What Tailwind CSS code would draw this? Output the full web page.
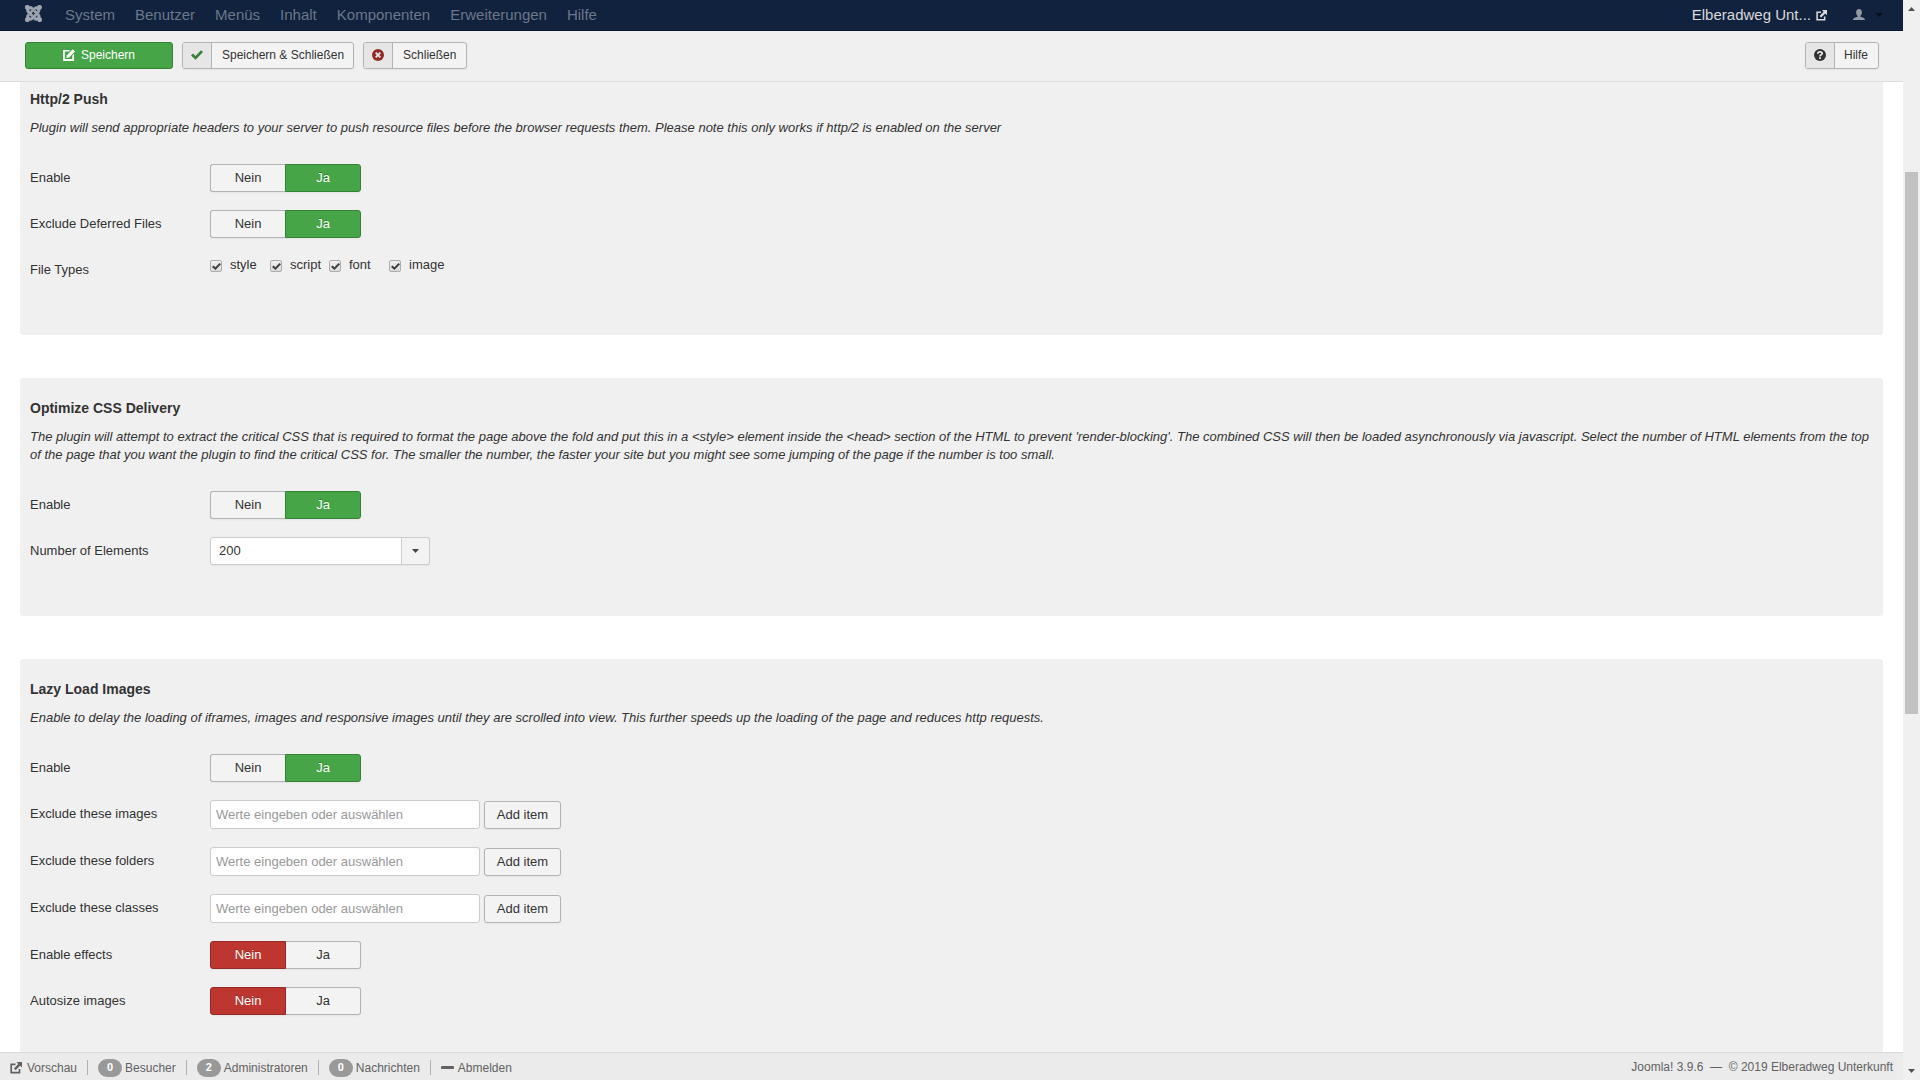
<!DOCTYPE html>
<html lang="de">
<head>
<meta charset="utf-8">
<meta name="viewport" content="width=device-width, initial-scale=1">
<title>Konfiguration</title>
<script src="https://cdn.jsdelivr.net/npm/@tailwindcss/browser@4"></script>
</head>
<body class="flex h-screen overflow-hidden bg-white font-['Liberation_Sans',Arial,sans-serif] text-[13px] leading-[18px] text-[#333]">

<svg class="hidden" xmlns="http://www.w3.org/2000/svg">
  <symbol id="joomla" viewBox="0 0 24 24"><path fill="currentColor" stroke="currentColor" stroke-width="1.2" d="M16.719 14.759L14.22 17.26l-2.37 2.37-.462.466c-1.368 1.365-3.297 1.83-5.047 1.397-.327 1.424-1.604 2.49-3.13 2.49C1.438 23.983 0 22.547 0 20.772c0-1.518 1.055-2.789 2.469-3.123-.446-1.76.016-3.705 1.396-5.08l.179-.18 2.37 2.37-.184.181c-.769.779-.769 2.024 0 2.789.771.78 2.022.78 2.787 0l.465-.465 2.367-2.371 2.502-2.506 2.368 2.372zM17.643 21.411c-1.822.563-3.885.12-5.328-1.318l-.18-.185 2.365-2.369.18.184c.771.768 2.018.768 2.787 0 .765-.765.769-2.01-.004-2.781l-.466-.465-2.365-2.37-2.502-2.503 2.37-2.369 2.499 2.505 2.367 2.37.464.464c1.365 1.36 1.846 3.278 1.411 5.021 1.56.224 2.759 1.56 2.759 3.18 0 1.784-1.439 3.21-3.209 3.21-1.545 0-2.851-1.096-3.135-2.565zM6.975 9.461l2.508-2.505 2.37-2.369.462-.461c1.365-1.366 3.27-1.845 5.01-1.41C17.566 1.161 18.875.02 20.445.02c1.77 0 3.209 1.435 3.209 3.209 0 1.631-1.23 2.985-2.819 3.195.435 1.739-.045 3.66-1.41 5.025l-.181.18-2.37-2.366.184-.184c.771-.77.77-2.016 0-2.783-.766-.768-2.01-.769-2.781 0l-.463.464-2.37 2.37-2.505 2.502zM3.209.02c1.5 0 2.76 1.025 3.12 2.415 1.77-.48 3.735-.015 5.115 1.365l.18.18-2.37 2.37-.18-.181c-.77-.77-2.02-.77-2.787 0-.766.766-.766 2.01 0 2.781l.466.465 2.37 2.37 2.5 2.5-2.37 2.37-2.5-2.5-2.37-2.37-.46-.465C2.55 9.96 2.07 8.05 2.49 6.31 1.06 5.98 0 4.73 0 3.229 0 1.455 1.438.02 3.209.02z"/></symbol>
  <symbol id="external" viewBox="0 0 12 12"><path fill="none" stroke="currentColor" stroke-width="1.7" d="M5.5 2.4H1.2v8.3h8.3V7"/><path fill="currentColor" d="M6.4 0H12v5.6L10.1 3.7 5.6 8.2 3.9 6.5 8.3 2z"/></symbol>
  <symbol id="edit" viewBox="0 0 13 13"><path fill="currentColor" d="M0 1h8.2L6.4 2.8H2v8h8V7.2l2-2V13H0z"/><path fill="currentColor" d="M10.6.2 13 2.6 6.5 9.2 3.6 9.8 4.2 6.8z"/></symbol>
  <symbol id="check" viewBox="0 0 12 12"><path fill="currentColor" d="M0 6.6 2 4.6l2.5 2.3L10 1.2l2 1.9-7.4 7.7z"/></symbol>
  <symbol id="cancel" viewBox="0 0 12 12"><circle cx="6" cy="6" r="6" fill="currentColor"/><path stroke="#e6e6e6" stroke-width="1.9" d="m3.7 3.7 4.6 4.6m0-4.6L3.7 8.3"/></symbol>
  <symbol id="help" viewBox="0 0 12 12"><circle cx="6" cy="6" r="6" fill="currentColor"/><path fill="none" stroke="#e6e6e6" stroke-width="1.7" d="M3.8 4.7C3.8 2.4 8.2 2.3 8.2 4.5 8.2 5.900 6 5.700 6 7.400"/><path fill="#e6e6e6" d="M5.100 8.200h1.800v1.700H5.100z"/></symbol>
  <symbol id="user" viewBox="0 0 12 12"><path fill="currentColor" d="M6 0c1.900 0 2.900 1.300 2.900 3.300 0 1.500-.6 2.900-1.500 3.600v.8c1.900.5 4.600 1.300 4.600 3.300H0c0-2 2.700-2.800 4.600-3.300v-.8C3.700 6.200 3.100 4.800 3.100 3.300 3.100 1.300 4.100 0 6 0z"/></symbol>
</svg>

<div class="flex min-w-0 flex-1 flex-col">
  <header class="shrink-0">
    <nav class="flex h-[31px] items-center border-b border-[#0c182c] bg-[#10223e] pr-5 pl-[25px] text-[15px] leading-5 text-[#6c7789]">
      <a href="#" aria-label="Joomla" class="mr-[23px] pb-1 text-[#9fa6b1]"><svg class="size-[17px] overflow-visible"><use href="#joomla"/></svg></a>
      <div class="flex gap-5">
        <a href="#">System</a><a href="#">Benutzer</a><a href="#">Menüs</a><a href="#">Inhalt</a><a href="#">Komponenten</a><a href="#">Erweiterungen</a><a href="#">Hilfe</a>
      </div>
      <a href="#" class="ml-auto flex items-center gap-[5px] text-[#d9d9d9]">Elberadweg Unt... <svg class="size-[11px]"><use href="#external"/></svg></a>
      <a href="#" aria-label="Benutzermenü" class="ml-[26px] flex items-center gap-2.5 text-[#9299a5]">
        <svg class="size-3"><use href="#user"/></svg>
        <svg class="h-1 w-2 text-[#080f1c]" viewBox="0 0 8 4"><path fill="currentColor" d="M0 0h8L4 4z"/></svg>
      </a>
    </nav>
    <div class="flex h-[51px] items-center gap-[9px] border-b border-[#dcdcdc] bg-[#f0f0f0] pr-6 pb-0.5 pl-[25px] text-xs">
      <button class="flex h-[27px] w-[148px] items-center justify-center gap-1.5 rounded-[3px] border border-[#378137] bg-[#46a546] text-white"><svg class="size-3"><use href="#edit"/></svg>Speichern</button>
      <button class="flex h-[27px] items-stretch overflow-hidden rounded-[3px] border border-[#b3b3b3] bg-[#f3f3f3] shadow-xs"><span class="flex w-7 items-center justify-center bg-[#e6e6e6] text-[#378137]"><svg class="size-3"><use href="#check"/></svg></span><span class="flex items-center border-l border-[#b3b3b3] pr-[9px] pl-2.5">Speichern &amp; Schließen</span></button>
      <button class="flex h-[27px] items-stretch overflow-hidden rounded-[3px] border border-[#b3b3b3] bg-[#f3f3f3] shadow-xs"><span class="flex w-7 items-center justify-center bg-[#e6e6e6] text-[#942a25]"><svg class="size-3"><use href="#cancel"/></svg></span><span class="flex items-center border-l border-[#b3b3b3] px-2.5">Schließen</span></button>
      <button class="ml-auto flex h-[27px] items-stretch overflow-hidden rounded-[3px] border border-[#b3b3b3] bg-[#f3f3f3] shadow-xs"><span class="flex w-7 items-center justify-center bg-[#e6e6e6]"><svg class="size-3"><use href="#help"/></svg></span><span class="flex items-center border-l border-[#b3b3b3] pr-2.5 pl-[9px]">Hilfe</span></button>
    </div>
  </header>

  <main class="flex min-h-0 flex-1 flex-col gap-[43px] overflow-hidden px-5">

    <section class="shrink-0 rounded-b-[3px] bg-[#f0f0f0] px-2.5 pt-2 pb-[51px]">
      <h4 class="text-sm leading-[18px] font-bold">Http/2 Push</h4>
      <p class="mt-[11px] mb-[27px] italic">Plugin will send appropriate headers to your server to push resource files before the browser requests them. Please note this only works if http/2 is enabled on the server</p>
      <div class="flex flex-col gap-[18px]">
        <div class="flex h-7 items-center" role="radiogroup" aria-labelledby="l1">
          <span id="l1" class="w-[180px]">Enable</span>
          <label class="flex h-7 w-[75px] items-center justify-center rounded-l-[3px] border border-r-0 border-[#b3b3b3] bg-[#f3f3f3] shadow-xs"><input type="radio" name="push" class="size-0 appearance-none">Nein</label>
          <label class="flex h-7 w-[76px] items-center justify-center rounded-r-[3px] border border-[#378137] bg-[#46a546] text-white shadow-xs text-shadow-[0_-1px_0_#00000040]"><input type="radio" name="push" checked class="size-0 appearance-none">Ja</label>
        </div>
        <div class="flex h-7 items-center" role="radiogroup" aria-labelledby="l2">
          <span id="l2" class="w-[180px]">Exclude Deferred Files</span>
          <label class="flex h-7 w-[75px] items-center justify-center rounded-l-[3px] border border-r-0 border-[#b3b3b3] bg-[#f3f3f3] shadow-xs"><input type="radio" name="deferred" class="size-0 appearance-none">Nein</label>
          <label class="flex h-7 w-[76px] items-center justify-center rounded-r-[3px] border border-[#378137] bg-[#46a546] text-white shadow-xs text-shadow-[0_-1px_0_#00000040]"><input type="radio" name="deferred" checked class="size-0 appearance-none">Ja</label>
        </div>
        <div class="flex h-7 items-start" role="group" aria-labelledby="l3">
          <span id="l3" class="w-[180px] self-center">File Types</span>
          <label class="flex w-[60px] gap-2"><span class="mt-1 grid size-3 place-items-center"><input type="checkbox" checked class="col-start-1 row-start-1 size-3 appearance-none rounded-[2px] border border-[#adadad] bg-linear-to-b from-[#f0f0f0] to-[#dcdcdc]"><svg class="pointer-events-none col-start-1 row-start-1 size-[9px] text-[#404040]"><use href="#check"/></svg></span>style</label>
          <label class="flex w-[59px] gap-2"><span class="mt-1 grid size-3 place-items-center"><input type="checkbox" checked class="col-start-1 row-start-1 size-3 appearance-none rounded-[2px] border border-[#adadad] bg-linear-to-b from-[#f0f0f0] to-[#dcdcdc]"><svg class="pointer-events-none col-start-1 row-start-1 size-[9px] text-[#404040]"><use href="#check"/></svg></span>script</label>
          <label class="flex w-[60px] gap-2"><span class="mt-1 grid size-3 place-items-center"><input type="checkbox" checked class="col-start-1 row-start-1 size-3 appearance-none rounded-[2px] border border-[#adadad] bg-linear-to-b from-[#f0f0f0] to-[#dcdcdc]"><svg class="pointer-events-none col-start-1 row-start-1 size-[9px] text-[#404040]"><use href="#check"/></svg></span>font</label>
          <label class="flex gap-2"><span class="mt-1 grid size-3 place-items-center"><input type="checkbox" checked class="col-start-1 row-start-1 size-3 appearance-none rounded-[2px] border border-[#adadad] bg-linear-to-b from-[#f0f0f0] to-[#dcdcdc]"><svg class="pointer-events-none col-start-1 row-start-1 size-[9px] text-[#404040]"><use href="#check"/></svg></span>image</label>
        </div>
      </div>
    </section>

    <section class="shrink-0 rounded-[3px] bg-[#f0f0f0] px-2.5 pt-[21px] pb-[51px]">
      <h4 class="text-sm leading-[18px] font-bold">Optimize CSS Delivery</h4>
      <p class="mt-[11px] mb-[27px] italic">The plugin will attempt to extract the critical CSS that is required to format the page above the fold and put this in a &lt;style&gt; element inside the &lt;head&gt; section of the HTML to prevent 'render-blocking'. The combined CSS will then be loaded asynchronously via javascript. Select the number of HTML elements from the top of the page that you want the plugin to find the critical CSS for. The smaller the number, the faster your site but you might see some jumping of the page if the number is too small.</p>
      <div class="flex flex-col gap-[18px]">
        <div class="flex h-7 items-center" role="radiogroup" aria-labelledby="l4">
          <span id="l4" class="w-[180px]">Enable</span>
          <label class="flex h-7 w-[75px] items-center justify-center rounded-l-[3px] border border-r-0 border-[#b3b3b3] bg-[#f3f3f3] shadow-xs"><input type="radio" name="css" class="size-0 appearance-none">Nein</label>
          <label class="flex h-7 w-[76px] items-center justify-center rounded-r-[3px] border border-[#378137] bg-[#46a546] text-white shadow-xs text-shadow-[0_-1px_0_#00000040]"><input type="radio" name="css" checked class="size-0 appearance-none">Ja</label>
        </div>
        <div class="flex h-7 items-center">
          <label for="num" class="w-[180px]">Number of Elements</label>
          <div class="grid w-[220px]">
            <select id="num" class="col-start-1 row-start-1 h-7 w-full appearance-none rounded-[3px] border border-[#ccc] bg-white pl-2 shadow-xs"><option>200</option><option>400</option></select>
            <span class="pointer-events-none col-start-1 row-start-1 flex h-7 w-[29px] items-center justify-center justify-self-end rounded-r-[3px] border border-[#ccc] bg-[#f3f3f3]"><svg class="h-1 w-[7px]" viewBox="0 0 7 4"><path fill="#444" d="M0 0h7L3.500 4z"/></svg></span>
          </div>
        </div>
      </div>
    </section>

    <section class="shrink-0 rounded-[3px] bg-[#f0f0f0] px-2.5 pt-[21px] pb-[51px]">
      <h4 class="text-sm leading-[18px] font-bold">Lazy Load Images</h4>
      <p class="mt-[11px] mb-[27px] italic">Enable to delay the loading of iframes, images and responsive images until they are scrolled into view. This further speeds up the loading of the page and reduces http requests.</p>
      <div class="flex flex-col gap-[18px]">
        <div class="flex h-7 items-center" role="radiogroup" aria-labelledby="l5">
          <span id="l5" class="w-[180px]">Enable</span>
          <label class="flex h-7 w-[75px] items-center justify-center rounded-l-[3px] border border-r-0 border-[#b3b3b3] bg-[#f3f3f3] shadow-xs"><input type="radio" name="lazy" class="size-0 appearance-none">Nein</label>
          <label class="flex h-7 w-[76px] items-center justify-center rounded-r-[3px] border border-[#378137] bg-[#46a546] text-white shadow-xs text-shadow-[0_-1px_0_#00000040]"><input type="radio" name="lazy" checked class="size-0 appearance-none">Ja</label>
        </div>
        <div class="flex items-end">
          <label for="ex1" class="w-[180px] self-start leading-7">Exclude these images</label>
          <input id="ex1" type="text" placeholder="Werte eingeben oder auswählen" class="mr-1 h-[29px] w-[270px] rounded-[3px] border border-[#ccc] bg-white px-[5px] placeholder:text-[#999]">
          <button class="h-7 w-[77px] rounded-[3px] border border-[#b3b3b3] bg-[#f3f3f3] shadow-xs">Add item</button>
        </div>
        <div class="flex items-end">
          <label for="ex2" class="w-[180px] self-start leading-7">Exclude these folders</label>
          <input id="ex2" type="text" placeholder="Werte eingeben oder auswählen" class="mr-1 h-[29px] w-[270px] rounded-[3px] border border-[#ccc] bg-white px-[5px] placeholder:text-[#999]">
          <button class="h-7 w-[77px] rounded-[3px] border border-[#b3b3b3] bg-[#f3f3f3] shadow-xs">Add item</button>
        </div>
        <div class="flex items-end">
          <label for="ex3" class="w-[180px] self-start leading-7">Exclude these classes</label>
          <input id="ex3" type="text" placeholder="Werte eingeben oder auswählen" class="mr-1 h-[29px] w-[270px] rounded-[3px] border border-[#ccc] bg-white px-[5px] placeholder:text-[#999]">
          <button class="h-7 w-[77px] rounded-[3px] border border-[#b3b3b3] bg-[#f3f3f3] shadow-xs">Add item</button>
        </div>
        <div class="flex h-7 items-center" role="radiogroup" aria-labelledby="l6">
          <span id="l6" class="w-[180px]">Enable effects</span>
          <label class="flex h-7 w-[76px] items-center justify-center rounded-l-[3px] border border-[#942a25] bg-[#bd362f] text-white shadow-xs text-shadow-[0_-1px_0_#00000040]"><input type="radio" name="effects" checked class="size-0 appearance-none">Nein</label>
          <label class="flex h-7 w-[75px] items-center justify-center rounded-r-[3px] border border-l-0 border-[#b3b3b3] bg-[#f3f3f3] shadow-xs"><input type="radio" name="effects" class="size-0 appearance-none">Ja</label>
        </div>
        <div class="flex h-7 items-center" role="radiogroup" aria-labelledby="l7">
          <span id="l7" class="w-[180px]">Autosize images</span>
          <label class="flex h-7 w-[76px] items-center justify-center rounded-l-[3px] border border-[#942a25] bg-[#bd362f] text-white shadow-xs text-shadow-[0_-1px_0_#00000040]"><input type="radio" name="autosize" checked class="size-0 appearance-none">Nein</label>
          <label class="flex h-7 w-[75px] items-center justify-center rounded-r-[3px] border border-l-0 border-[#b3b3b3] bg-[#f3f3f3] shadow-xs"><input type="radio" name="autosize" class="size-0 appearance-none">Ja</label>
        </div>
      </div>
    </section>
  </main>

  <footer class="flex h-7 shrink-0 items-center gap-2.5 border-t border-[#d9d9d9] bg-[#ebebeb] px-2.5 pt-0.5 text-xs text-[#626262]">
    <a href="#" class="flex items-center gap-[5px]"><svg class="size-3"><use href="#external"/></svg>Vorschau</a>
    <span class="h-[15px] w-px bg-[#b0b0b0]"></span>
    <a href="#" class="flex items-center gap-[3px]"><span class="flex h-[18px] w-6 items-center justify-center rounded-full bg-[#999] text-[11px] font-bold text-white">0</span>Besucher</a>
    <span class="h-[15px] w-px bg-[#b0b0b0]"></span>
    <a href="#" class="flex items-center gap-[3px]"><span class="flex h-[18px] w-6 items-center justify-center rounded-full bg-[#999] text-[11px] font-bold text-white">2</span>Administratoren</a>
    <span class="h-[15px] w-px bg-[#b0b0b0]"></span>
    <a href="#" class="flex items-center gap-[3px]"><span class="flex h-[18px] w-6 items-center justify-center rounded-full bg-[#999] text-[11px] font-bold text-white">0</span>Nachrichten</a>
    <span class="h-[15px] w-px bg-[#b0b0b0]"></span>
    <a href="#" class="flex items-center gap-1"><span class="h-[3px] w-[13px] rounded-[1px] bg-[#626262]"></span>Abmelden</a>
    <p class="ml-auto pb-0.5">Joomla! 3.9.6 &nbsp;—&nbsp; © 2019 Elberadweg Unterkunft</p>
  </footer>
</div>

<div aria-hidden="true" class="flex w-[17px] shrink-0 flex-col items-center bg-[#f0f0f0] py-[7px]">
  <svg class="h-1 w-[7px] shrink-0" viewBox="0 0 7 4"><path fill="#505050" d="M0 4h7L3.500 0z"/></svg>
  <div class="flex w-full flex-1 flex-col items-center">
    <div class="basis-[15.2%]"></div>
    <div class="w-[13px] basis-[51.2%] bg-[#c1c1c1]"></div>
  </div>
  <svg class="h-1 w-[7px] shrink-0" viewBox="0 0 7 4"><path fill="#505050" d="M0 0h7L3.500 4z"/></svg>
</div>
</body>
</html>
